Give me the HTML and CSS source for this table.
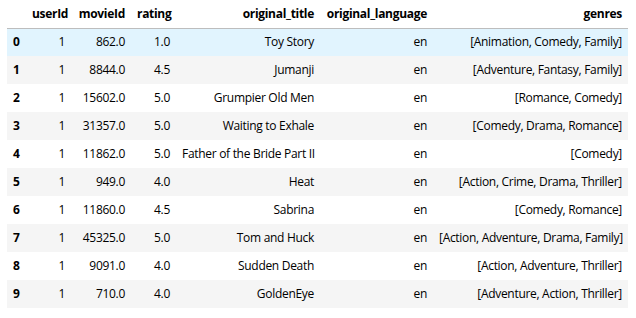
FILE: index.html
```html
<!DOCTYPE html>
<html>
<head>
<meta charset="utf-8">
<link rel="stylesheet" href="styles.css">
</head>
<body>
<div class="output">
<table class="dataframe">
<colgroup>
<col class="c-idx"><col class="c-user"><col class="c-movie"><col class="c-rating"><col class="c-title"><col class="c-lang"><col class="c-genres">
</colgroup>
<thead>
<tr><th></th><th>userId</th><th>movieId</th><th>rating</th><th>original_title</th><th>original_language</th><th>genres</th></tr>
</thead>
<tbody>
<tr class="hover"><th>0</th><td>1</td><td>862.0</td><td>1.0</td><td>Toy Story</td><td>en</td><td>[Animation, Comedy, Family]</td></tr>
<tr><th>1</th><td>1</td><td>8844.0</td><td>4.5</td><td>Jumanji</td><td>en</td><td>[Adventure, Fantasy, Family]</td></tr>
<tr><th>2</th><td>1</td><td>15602.0</td><td>5.0</td><td>Grumpier Old Men</td><td>en</td><td>[Romance, Comedy]</td></tr>
<tr><th>3</th><td>1</td><td>31357.0</td><td>5.0</td><td>Waiting to Exhale</td><td>en</td><td>[Comedy, Drama, Romance]</td></tr>
<tr><th>4</th><td>1</td><td>11862.0</td><td>5.0</td><td>Father of the Bride Part II</td><td>en</td><td>[Comedy]</td></tr>
<tr><th>5</th><td>1</td><td>949.0</td><td>4.0</td><td>Heat</td><td>en</td><td>[Action, Crime, Drama, Thriller]</td></tr>
<tr><th>6</th><td>1</td><td>11860.0</td><td>4.5</td><td>Sabrina</td><td>en</td><td>[Comedy, Romance]</td></tr>
<tr><th>7</th><td>1</td><td>45325.0</td><td>5.0</td><td>Tom and Huck</td><td>en</td><td>[Action, Adventure, Drama, Family]</td></tr>
<tr><th>8</th><td>1</td><td>9091.0</td><td>4.0</td><td>Sudden Death</td><td>en</td><td>[Action, Adventure, Thriller]</td></tr>
<tr><th>9</th><td>1</td><td>710.0</td><td>4.0</td><td>GoldenEye</td><td>en</td><td>[Adventure, Action, Thriller]</td></tr>
</tbody>
</table>
</div>
</body>
</html>
```
FILE: styles.css
```css
html, body {
  margin: 0;
  padding: 0;
  background: #ffffff;
}
.output {
  padding-left: 7px;
}
.dataframe {
  border-collapse: collapse;
  table-layout: fixed;
  width: 621px;
  font-family: "Open Sans", "Noto Sans", sans-serif;
  font-size: 12px;
  letter-spacing: -0.3px;
  color: #000;
}
.c-idx { width: 19px; }
.c-user { width: 45px; }
.c-movie { width: 60px; }
.c-rating { width: 45px; }
.c-title { width: 144px; }
.c-lang { width: 113px; }
.c-genres { width: 195px; }
.dataframe th,
.dataframe td {
  padding: 0 6px;
  height: 28px;
  line-height: 16px;
  text-align: right;
  vertical-align: middle;
  white-space: nowrap;
  box-sizing: border-box;
}
.dataframe thead th {
  font-weight: bold;
  height: 28px;
  border-bottom: 1px solid #bdbdbd;
}
.dataframe tbody th {
  font-weight: bold;
  text-align: left;
}
.dataframe tbody tr:nth-child(odd) {
  background: #ffffff;
}
.dataframe tbody tr:nth-child(even) {
  background: #f5f5f5;
}
.dataframe tbody tr.hover {
  background: #e1f4fe;
}
```
